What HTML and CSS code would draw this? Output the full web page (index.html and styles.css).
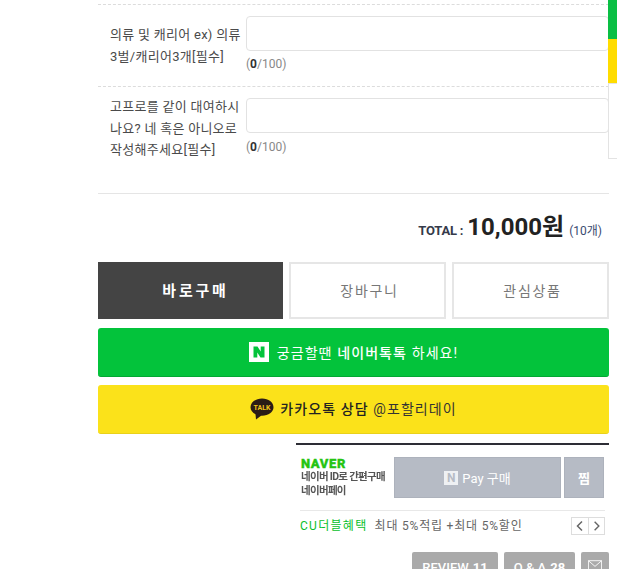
FILE: index.html
```html
<!DOCTYPE html>
<html lang="ko">
<head>
<meta charset="utf-8">
<title>상품 구매</title>
<link rel="stylesheet" href="styles.css">
</head>
<body>
<div class="side">
  <div class="side-green"></div>
  <div class="side-yellow"></div>
  <div class="side-box"></div>
</div>
<main class="panel">
  <section class="options">
    <div class="opt">
      <div class="opt-label">의류 및 캐리어 ex) 의류 3벌/캐리어3개[필수]</div>
      <div class="opt-field">
        <div class="opt-input"></div>
        <div class="opt-count">(<b>0</b>/100)</div>
      </div>
    </div>
    <div class="opt opt-b">
      <div class="opt-label">고프로를 같이 대여하시나요? 네 혹은 아니오로 작성해주세요[필수]</div>
      <div class="opt-field">
        <div class="opt-input"></div>
        <div class="opt-count">(<b>0</b>/100)</div>
      </div>
    </div>
  </section>
  <div class="total">
    <span class="total-label">TOTAL :</span>
    <strong class="total-price">10,000원</strong>
    <span class="total-qty">(10개)</span>
  </div>
  <div class="actions">
    <div class="btn btn-buy">바로구매</div>
    <div class="btn btn-line btn-cart">장바구니</div>
    <div class="btn btn-line btn-wish">관심상품</div>
  </div>
  <div class="wide wide-naver">
    <svg class="icon-n" viewBox="0 0 20 20" aria-hidden="true"><rect width="20" height="20" fill="#fff"/><path d="M4.500 4.500h4l3.200 5V4.500h3.800v11h-4L8.300 10.600v4.900H4.500z" fill="#03c33b"/></svg>
    <span>궁금할땐 <b>네이버톡톡</b> 하세요!</span>
  </div>
  <div class="wide wide-kakao">
    <svg class="icon-talk" viewBox="0 0 24 22" aria-hidden="true"><path d="M12 0.500C5.500 0.500 0.500 4.400 0.500 9.200c0 3 2 5.600 5 7.100L6 21.500l5-3.800h1c6.500 0 11.500-3.700 11.500-8.500S18.500 0.500 12 0.500z" fill="#2a1c16"/><text x="12" y="11.800" text-anchor="middle" class="talk-text">TALK</text></svg>
    <span><b class="kakao-b">카카오톡 상담</b> @포할리데이</span>
  </div>
  <section class="npay">
    <div class="npay-main">
      <div class="npay-logo">
        <div class="npay-brand">NAVER</div>
        <div class="npay-sub">네이버 ID로 간편구매<br>네이버페이</div>
      </div>
      <div class="npay-btn npay-buy">
        <span class="npay-n">N</span>
        <span>Pay 구매</span>
      </div>
      <div class="npay-btn npay-zzim">찜</div>
    </div>
    <div class="npay-promo">
      <span class="promo-green">CU더블혜택</span>
      <span class="promo-text">최대 5%적립 +최대 5%할인</span>
      <div class="pager">
        <span class="pager-btn"><svg viewBox="0 0 16 16" aria-hidden="true"><path d="M10 3.500 5.500 8l4.500 4.500" class="chev"/></svg></span>
        <span class="pager-btn"><svg viewBox="0 0 16 16" aria-hidden="true"><path d="M6 3.500 10.500 8 6 12.500" class="chev"/></svg></span>
      </div>
    </div>
  </section>
  <nav class="tabs">
    <span class="tab tab-review">REVIEW <b>11</b></span>
    <span class="tab tab-qa">Q &amp; A <b>28</b></span>
    <span class="tab tab-mail"><svg viewBox="0 0 16 12" aria-hidden="true"><path d="M0.500 0.500h15v11h-15zM0.500 0.500 8 7l7.500-6.500" class="mail"/></svg></span>
  </nav>
</main>
</body>
</html>
```
FILE: styles.css
```css
* { box-sizing: border-box; }
html, body { margin: 0; padding: 0; }
body {
  width: 617px;
  height: 569px;
  overflow: hidden;
  position: relative;
  background: #fff;
  font-family: Roboto, "Noto Sans CJK KR", sans-serif;
  color: #333;
}
.side {
  position: absolute;
  left: 608px;
  top: 0;
  width: 9px;
  display: flex;
  flex-direction: column;
}
.side-green { height: 39px; background: #0abf44; }
.side-yellow { height: 44px; background: #ffdc00; }
.side-box { height: 76px; background: #fff; border-left: 1px solid #e3e3e3; border-top: 1px solid #e3e3e3; border-bottom: 1px solid #e3e3e3; }

.panel { margin-left: 98px; width: 511px; padding-top: 4px; }
.options { border-bottom: 1px solid #e5e5e5; height: 190px; }
.opt { display: flex; border-top: 1px dashed #dcdcdc; padding: 11px 0 0 12px; height: 82px; }
.opt-label {
  width: 136px;
  align-self: center;
  font-size: 13px;
  line-height: 21.500px;
  margin-top: -11px;
  color: #4a4a4a;
  letter-spacing: 0.280px;
  word-break: break-all;
}
.opt-b .opt-label { margin-top: -9px; }
.opt-field { flex: 1; }
.opt-input { height: 35px; border: 1px solid #e2e2e2; border-radius: 4px; background: #fff; }
.opt-count { font-size: 12px; line-height: 14px; margin-top: 6px; color: #888; }
.opt-b .opt-count { margin-top: 7px; }
.opt-count b { color: #333; }

.total {
  display: flex;
  justify-content: flex-end;
  align-items: baseline;
  gap: 4px;
  height: 68px;
  padding: 15px 7px 0 0;
}
.total-label { font-size: 13px; font-weight: 700; color: #353a4a; letter-spacing: -0.200px; }
.total-price { font-size: 24px; font-weight: 700; color: #222; line-height: 36px; }
.total-qty { font-size: 12px; color: #3a4a70; margin-left: 1px; }

.actions { display: flex; gap: 6px; height: 57px; }
.btn { display: flex; align-items: center; justify-content: center; font-size: 14px; padding-bottom: 2px; }
.btn-buy { width: 185px; background: #444; color: #fff; font-weight: 700; font-size: 15px; letter-spacing: 2.800px; padding-left: 10px; }
.btn-line { border: 2px solid #e6e6e6; color: #777; flex: 1; letter-spacing: 1.700px; padding-left: 4px; }

.wide {
  display: flex;
  align-items: center;
  justify-content: center;
  gap: 8px;
  height: 49px;
  border-radius: 3px;
  font-size: 14px;
  letter-spacing: 1.100px;
}
.wide b { font-weight: 500; }
.wide-naver { margin-top: 9px; background: #03c33b; color: #fff; border-bottom: 1px solid #02a833; }
.wide-kakao { margin-top: 8px; background: #fbe21a; color: #333; border-bottom: 1px solid #e9d11a; gap: 6px; padding-bottom: 2px; }
.icon-n { width: 20px; height: 20px; }
.icon-talk { width: 24px; height: 22px; margin-top: 2px; }
.talk-text { font: 700 7px Roboto, sans-serif; fill: #f0c419; letter-spacing: 0; }
.kakao-b { color: #222; }

.npay { margin-left: 198px; border-top: 2px solid #2d2d35; margin-top: 9px; }
.npay-main { display: flex; padding-top: 12px; height: 66px; border-bottom: 1px solid #e8e8e8; margin: 0 4px; }
.npay-logo { width: 94px; padding-left: 1px; }
.npay-brand { font: 900 13px/13px Roboto, sans-serif; color: #26c412; letter-spacing: 0.600px; -webkit-text-stroke: 0.300px #26c412; }
.npay-sub { font-size: 10.500px; line-height: 14px; font-weight: 700; color: #555; letter-spacing: -0.700px; filter: blur(0.300px); }
.npay-btn { display: flex; align-items: center; justify-content: center; height: 41px; background: #b6bbc5; border: 1px solid #adb2bc; color: #fff; font-size: 13px; }
.npay-buy { width: 167px; gap: 4px; }
.npay-zzim { width: 40px; margin-left: 3px; font-weight: 700; }
.npay-n { width: 14px; height: 14px; background: #eef0f3; color: #b6bbc5; font: 700 12px/14px Roboto, sans-serif; text-align: center; }

.npay-promo { display: flex; align-items: center; height: 26px; margin: 0 4px; font-size: 12px; }
.promo-green { color: #0abf2c; letter-spacing: 1.300px; }
.promo-text { color: #666; margin-left: 7px; letter-spacing: 0.800px; }
.pager { margin-left: auto; display: flex; border: 1px solid #ddd; margin-top: 3px; }
.pager-btn { width: 16px; height: 16px; display: block; }
.pager-btn + .pager-btn { border-left: 1px solid #ddd; }
.pager-btn svg { display: block; width: 100%; height: 100%; }
.chev { fill: none; stroke: #666; stroke-width: 1.500; }

.tabs { display: flex; justify-content: flex-end; gap: 6px; margin-top: 15px; }
.tab { display: flex; align-items: center; justify-content: center; height: 30px; background: #aaa; color: #fff; border-radius: 2px; font-size: 13px; font-weight: 500; }
.tab b { margin-left: 4px; font-size: 13px; }
.tab-review { width: 86px; }
.tab-qa { width: 71px; }
.tab-mail { width: 28px; align-items: flex-start; padding-top: 8px; }
.tab-mail svg { width: 14px; height: 11px; }
.mail { fill: none; stroke: #fff; stroke-width: 1; }
```
